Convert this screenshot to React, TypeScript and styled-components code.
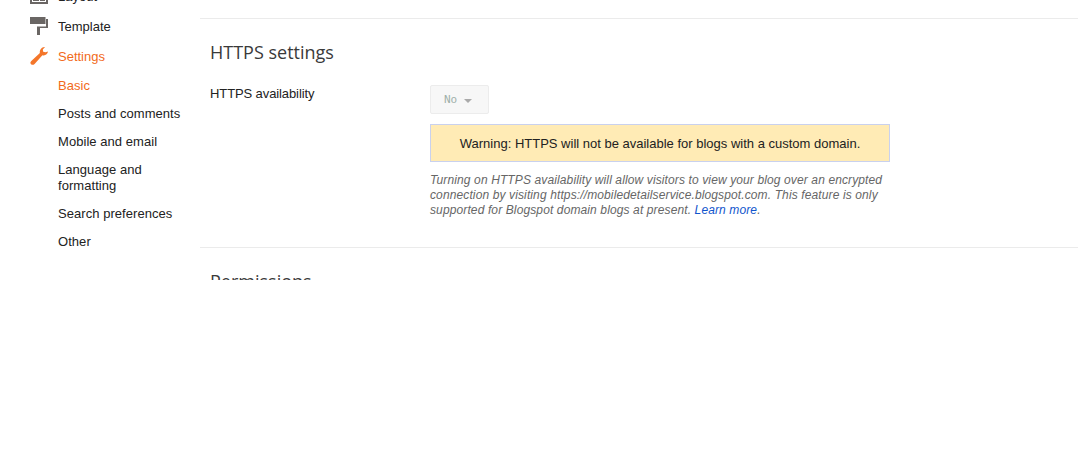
import React from "react";
import styled, { createGlobalStyle } from "styled-components";

const GlobalStyle = createGlobalStyle`
  html, body {
    margin: 0;
    padding: 0;
    background: #fff;
    font-family: "Liberation Sans", Arial, sans-serif;
    font-size: 13px;
    color: #222;
  }
`;

const Frame = styled.div`
  display: flex;
  height: 280px;
  overflow: hidden;
`;

const Sidebar = styled.nav`
  width: 200px;
  flex: none;
  padding: 0 0 0 30px;
  box-sizing: border-box;
`;

const TopItems = styled.div`
  margin-top: -19px;
`;

const NavItem = styled.div<{ $active?: boolean }>`
  display: flex;
  align-items: center;
  height: 30px;
  color: ${(p) => (p.$active ? "#f26a1b" : "#222")};
`;

const IconSlot = styled.span`
  width: 28px;
  flex: none;
  display: flex;
  align-items: center;
`;

const SubList = styled.div`
  margin: 7px 0 0 28px;
  display: flex;
  flex-direction: column;
  gap: 12px;
  letter-spacing: 0.05px;
`;

const SubItem = styled.div<{ $active?: boolean }>`
  line-height: 16px;
  color: ${(p) => (p.$active ? "#f26a1b" : "#222")};
`;

const Main = styled.main`
  flex: 1;
  min-width: 0;
  padding-top: 18px;
`;

const Section = styled.section`
  border-top: 1px solid #ebebeb;
  padding: 21px 10px 29px;
`;

const Heading = styled.h2`
  margin: 0 0 22px;
  font-family: "Open Sans", sans-serif;
  font-size: 18px;
  font-weight: 400;
  line-height: 24px;
  color: #3a3a3a;
`;

const Row = styled.div`
  display: flex;
`;

const RowLabel = styled.div`
  width: 220px;
  flex: none;
  line-height: 16px;
  letter-spacing: -0.1px;
`;

const RowBody = styled.div`
  width: 460px;
`;

const SelectBox = styled.div`
  display: flex;
  align-items: center;
  box-sizing: border-box;
  width: 59px;
  height: 29px;
  margin-top: -1px;
  padding-left: 13px;
  gap: 9px;
  background: #f7f7f7;
  border: 1px solid #ececec;
  border-radius: 2px;
  font-family: "DejaVu Sans Mono", monospace;
  font-size: 11px;
  color: #9fb0aa;
`;

const Caret = styled.span`
  width: 0;
  height: 0;
  margin: 3px 0 0 -2px;
  border-left: 4px solid transparent;
  border-right: 4px solid transparent;
  border-top: 4px solid #aaa;
`;

const Warning = styled.div`
  box-sizing: border-box;
  height: 38px;
  margin-top: 10px;
  background: #ffebb5;
  border: 1px solid #c9d1ee;
  display: flex;
  align-items: center;
  justify-content: center;
  font-size: 13px;
  color: #222;
`;

const Help = styled.p`
  margin: 11px 0 0;
  font-size: 12px;
  line-height: 15px;
  font-style: italic;
  letter-spacing: 0.12px;
  color: #666;
`;

const HelpLink = styled.a`
  color: #15c;
  text-decoration: none;
`;

const RollerIcon = () => (
  <svg width="18" height="18" viewBox="0 0 18 18">
    <path d="M0 0h15.500v7H0zM16 2h2v9H10v7H7V9.500h9z" fill="#6a6664" />
  </svg>
);

const LayoutIcon = () => (
  <svg width="18" height="16" viewBox="0 0 18 16">
    <path d="M0 0h18v16H0zM2 2v12h14V2zM3 6h6v7H3zM10 6h5v7h-5z" fill="#6a6664" fillRule="evenodd" />
  </svg>
);

const WrenchIcon = () => (
  <svg width="18" height="18" viewBox="0 0 18 18">
    <path d="M18 4.500c-.3 2.800-3 4.500-5.600 3.700L4.600 16.900c-1 1.100-2.500 1.300-3.500.4-1.100-1-.9-2.400.2-3.400l8.600-7.800C9.200 3.200 11.900-.3 15 0l-2.200 2.600.4 2.200 2.200.5z" fill="#f4762a" />
  </svg>
);

export default function App() {
  return (
    <>
      <GlobalStyle />
      <Frame>
        <Sidebar>
          <TopItems>
            <NavItem>
              <IconSlot><LayoutIcon /></IconSlot>
              Layout
            </NavItem>
            <NavItem>
              <IconSlot><RollerIcon /></IconSlot>
              Template
            </NavItem>
            <NavItem $active>
              <IconSlot><WrenchIcon /></IconSlot>
              Settings
            </NavItem>
          </TopItems>
          <SubList>
            <SubItem $active>Basic</SubItem>
            <SubItem>Posts and comments</SubItem>
            <SubItem>Mobile and email</SubItem>
            <SubItem>Language and formatting</SubItem>
            <SubItem>Search preferences</SubItem>
            <SubItem>Other</SubItem>
          </SubList>
        </Sidebar>
        <Main>
          <Section>
            <Heading>HTTPS settings</Heading>
            <Row>
              <RowLabel>HTTPS availability</RowLabel>
              <RowBody>
                <SelectBox>No<Caret /></SelectBox>
                <Warning>Warning: HTTPS will not be available for blogs with a custom domain.</Warning>
                <Help>
                  Turning on HTTPS availability will allow visitors to view your blog over an encrypted
                  connection by visiting https://mobiledetailservice.blogspot.com. This feature is only
                  supported for Blogspot domain blogs at present. <HelpLink href="#">Learn more</HelpLink>.
                </Help>
              </RowBody>
            </Row>
          </Section>
          <Section>
            <Heading>Permissions</Heading>
          </Section>
        </Main>
      </Frame>
    </>
  );
}
